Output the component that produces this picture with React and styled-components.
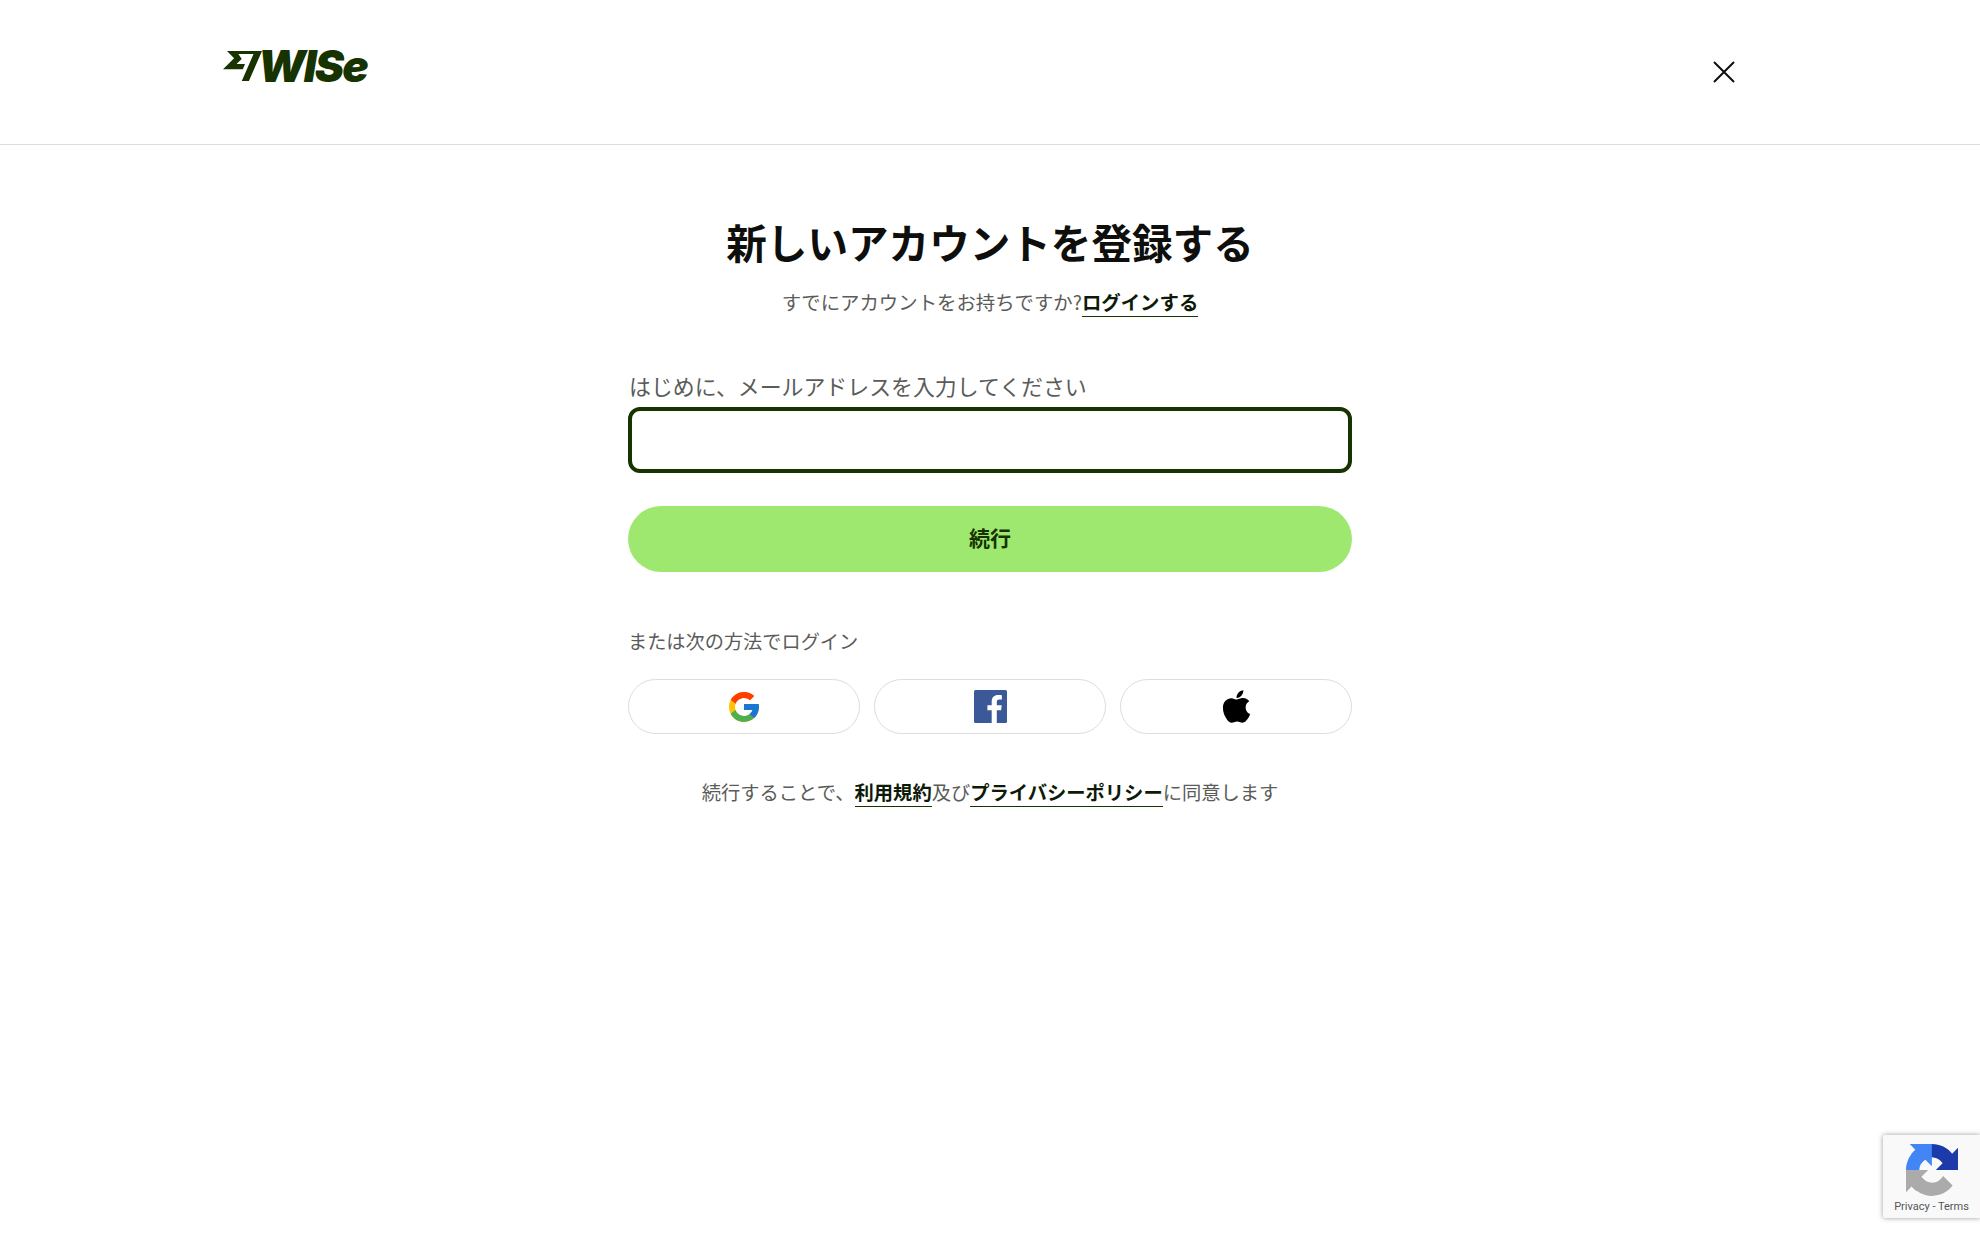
import React from 'react';
import styled, { createGlobalStyle } from 'styled-components';
import { FcGoogle } from 'react-icons/fc';
import { FaApple } from 'react-icons/fa';

const GlobalStyle = createGlobalStyle`
	html, body {
		margin: 0;
		padding: 0;
		background: #ffffff;
		font-family: 'Noto Sans CJK JP', 'Noto Sans', sans-serif;
	}
	* {
		box-sizing: border-box;
	}
`;

const Page = styled.div`
	position: relative;
	height: 1238px;
	overflow: hidden;
	background: #ffffff;
`;

const Header = styled.header`
	display: flex;
	align-items: flex-start;
	justify-content: space-between;
	height: 145px;
	padding: 48px 245px 0 223px;
	border-bottom: 1px solid #dcdedb;
`;

const Logo = styled.div`
	display: flex;
	align-items: center;
	height: 36px;
	color: #163300;
`;

const LogoWord = styled.span`
	margin-left: -4px;
	font-family: 'Inter', 'Liberation Sans', sans-serif;
	font-size: 44px;
	font-weight: 900;
	font-style: italic;
	letter-spacing: -1.8px;
	line-height: 36px;
`;

const CloseButton = styled.button`
	display: flex;
	padding: 0;
	margin-top: 13px;
	border: 0;
	background: none;
	color: #0e0f0c;
`;

const Main = styled.main`
	display: flex;
	flex-direction: column;
	width: 724px;
	margin: 0 auto;
	padding-top: 67px;
`;

const Title = styled.h1`
	margin: 0;
	font-size: 40.6px;
	line-height: 60px;
	font-weight: 700;
	text-align: center;
	color: #0e0f0c;
`;

const Subtitle = styled.p`
	margin: 15px 0 0;
	font-size: 19.4px;
	line-height: 30px;
	text-align: center;
	color: #5a5c59;
`;

const TextLink = styled.a`
	font-weight: 700;
	color: #0e1a08;
	border-bottom: 1px solid #163300;
`;

const Label = styled.label`
	display: block;
	margin: 53px 0 0 1px;
	font-size: 21.9px;
	line-height: 32px;
	color: #5a5c59;
`;

const EmailInput = styled.input`
	display: block;
	width: 100%;
	height: 66px;
	margin-top: 5px;
	border: 4px solid #163300;
	border-radius: 12px;
	background: #ffffff;
	outline: none;
`;

const ContinueButton = styled.button`
	height: 66px;
	margin-top: 33px;
	padding: 0 0 4px;
	border: 0;
	border-radius: 33px;
	background: #9fe870;
	color: #163300;
	font-family: inherit;
	font-size: 21px;
	font-weight: 700;
`;

const AltLabel = styled.p`
	margin: 54px 0 0;
	font-size: 19.2px;
	line-height: 30px;
	color: #5a5c59;
`;

const SocialRow = styled.div`
	display: grid;
	grid-template-columns: repeat(3, 1fr);
	gap: 14px;
	margin-top: 23px;
`;

const SocialButton = styled.button`
	display: flex;
	align-items: center;
	justify-content: center;
	height: 55px;
	padding: 0;
	border: 1px solid #dcdedb;
	border-radius: 28px;
	background: #ffffff;
`;

const Terms = styled.p`
	margin: 43px 0 0;
	font-size: 19.3px;
	line-height: 30px;
	text-align: center;
	color: #5a5c59;
`;

const Recaptcha = styled.div`
	position: absolute;
	right: 0;
	top: 1135px;
	display: flex;
	flex-direction: column;
	align-items: center;
	width: 97px;
	height: 83px;
	padding-top: 9px;
	background: #f9f9f9;
	border-radius: 2px 0 0 2px;
	box-shadow: 0 0 5px rgba(128, 128, 128, 0.8);
`;

const RecaptchaText = styled.span`
	margin-top: 4px;
	font-family: 'Roboto', 'Liberation Sans', sans-serif;
	font-size: 11px;
	line-height: 13px;
	white-space: nowrap;
	color: #555555;
`;

const WiseFlag = () => (
	<svg width="39" height="30" viewBox="0 1.768 24 22.232" preserveAspectRatio="none" fill="#163300">
		<path d="M6.826 7.232 0 15.21h12.188l1.37-3.762H8.335l3.191-3.69.01-.098L9.461 4.083h9.336L11.56 24h4.378L24 1.768H2.47l4.356 5.464Z" />
	</svg>
);

const CloseIcon = () => (
	<svg width="22" height="22" viewBox="0 0 22 22" fill="none" stroke="currentColor" strokeWidth="2">
		<path d="M1 1 21 21M21 1 1 21" />
	</svg>
);

const FacebookIcon = () => (
	<svg width="33" height="33" viewBox="0 0 33 33">
		<rect width="33" height="33" rx="1.5" fill="#3b5998" />
		<path
			fill="#ffffff"
			d="M22.8 33V20.2h4.3l.6-5h-4.9V12c0-1.4.4-2.4 2.5-2.4h2.6V5.2c-.5-.1-2-.2-3.8-.2-3.8 0-6.4 2.3-6.4 6.6v3.6h-4.3v5h4.3V33h5.1Z"
		/>
	</svg>
);

const RecaptchaIcon = () => (
	<svg width="52" height="52" viewBox="0 0 64 64">
		<path fill="#1c3aa9" d="M64 31.955l-.033-1.37V4.687l-7.16 7.16C50.948 4.674 42.033.093 32.05.093c-10.4 0-19.622 4.96-25.458 12.64l11.736 11.86a15.55 15.55 0 0 1 4.754-5.334c2.05-1.6 4.952-2.906 8.968-2.906.485 0 .86.057 1.135.163 4.976.393 9.288 3.14 11.828 7.124l-8.307 8.307 32.294.01" />
		<path fill="#4285f4" d="M31.862.094l-1.37.033H4.594l7.16 7.16C4.58 13.147 0 22.06 0 32.046c0 10.4 4.96 19.622 12.64 25.458L24.5 45.768a15.55 15.55 0 0 1-5.334-4.754c-1.6-2.05-2.906-4.952-2.906-8.968 0-.485.057-.86.163-1.135.393-4.976 3.14-9.288 7.124-11.828l8.307 8.307L31.862.094" />
		<path fill="#ababab" d="M.001 32l.033 1.37v25.898l7.16-7.16c5.86 7.173 14.774 11.754 24.76 11.754 10.4 0 19.622-4.96 25.458-12.64l-11.736-11.86a15.55 15.55 0 0 1-4.754 5.334c-2.05 1.6-4.952 2.906-8.968 2.906-.485 0-.86-.057-1.135-.163-4.976-.393-9.288-3.14-11.828-7.124l8.307-8.307L.001 32" />
	</svg>
);

export default function App() {
	return (
		<Page>
			<GlobalStyle />
			<Header>
				<Logo>
					<WiseFlag />
					<LogoWord>WISe</LogoWord>
				</Logo>
				<CloseButton type="button" aria-label="close">
					<CloseIcon />
				</CloseButton>
			</Header>
			<Main>
				<Title>新しいアカウントを登録する</Title>
				<Subtitle>
					すでにアカウントをお持ちですか?<TextLink>ログインする</TextLink>
				</Subtitle>
				<Label htmlFor="email">はじめに、メールアドレスを入力してください</Label>
				<EmailInput id="email" type="email" />
				<ContinueButton type="button">続行</ContinueButton>
				<AltLabel>または次の方法でログイン</AltLabel>
				<SocialRow>
					<SocialButton type="button" aria-label="Google">
						<FcGoogle size={36} />
					</SocialButton>
					<SocialButton type="button" aria-label="Facebook">
						<FacebookIcon />
					</SocialButton>
					<SocialButton type="button" aria-label="Apple">
						<FaApple size={37} color="#000000" />
					</SocialButton>
				</SocialRow>
				<Terms>
					続行することで、<TextLink>利用規約</TextLink>及び<TextLink>プライバシーポリシー</TextLink>に同意します
				</Terms>
			</Main>
			<Recaptcha>
				<RecaptchaIcon />
				<RecaptchaText>Privacy - Terms</RecaptchaText>
			</Recaptcha>
		</Page>
	);
}
